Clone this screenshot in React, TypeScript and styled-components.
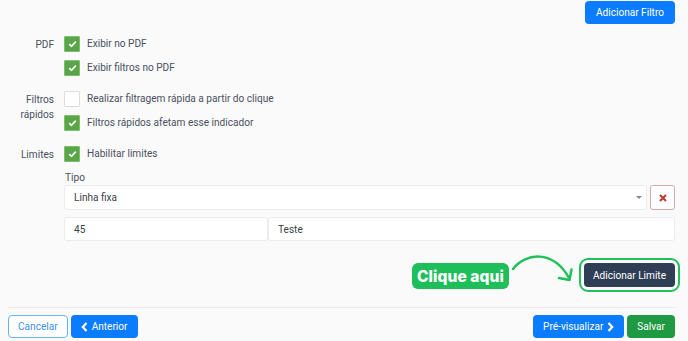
import React from 'react';
import styled, { createGlobalStyle } from 'styled-components';

const GlobalStyle = createGlobalStyle`
  html, body {
    margin: 0;
    padding: 0;
    background: #fafafa;
  }
  body {
    font-family: Roboto, "Liberation Sans", Arial, sans-serif;
    font-size: 10.1px;
    color: #4a5061;
  }
`;

const Page = styled.div`
  width: 688px;
  height: 341px;
  box-sizing: border-box;
  padding: 1px 13px 0 8px;
  display: flex;
  flex-direction: column;
  overflow: hidden;
`;

const TopBar = styled.div`
  display: flex;
  justify-content: flex-end;
`;

type Variant = 'primary' | 'dark' | 'success' | 'outline';

const Button = styled.button<{ $variant: Variant; $highlight?: boolean }>`
  font-family: Roboto, "Liberation Sans", Arial, sans-serif;
  font-size: 10.1px;
  height: ${(p) => (p.$variant === 'dark' ? '24px' : '23px')};
  padding: 0 ${(p) => (p.$variant === 'dark' ? '8px' : '9px')};
  border-radius: 4px;
  border: 1px solid transparent;
  display: inline-flex;
  align-items: center;
  gap: 4px;
  cursor: pointer;
  white-space: nowrap;
  color: #fff;
  background: ${(p) =>
    p.$variant === 'primary'
      ? '#0b7cfd'
      : p.$variant === 'dark'
        ? '#2f3e55'
        : p.$variant === 'success'
          ? '#1f9a43'
          : '#fff'};
  ${(p) =>
    p.$variant === 'outline' &&
    `
    color: #3d8ff0;
    border-color: #6ab1ff;
  `}
  ${(p) =>
    p.$highlight &&
    `
    outline: 2px solid #22c05a;
    outline-offset: 3px;
  `}
`;

const Form = styled.div`
  margin-top: 12px;
  display: flex;
  flex-direction: column;
  gap: 15px;
`;

const Group = styled.div`
  display: grid;
  grid-template-columns: 46px 1fr;
  column-gap: 10px;
`;

const GroupLabel = styled.div`
  text-align: right;
  line-height: 15px;
  padding-top: 0.5px;
`;

const Options = styled.div`
  display: flex;
  flex-direction: column;
  gap: 8px;
`;

const Option = styled.label`
  display: flex;
  align-items: center;
  gap: 7px;
  height: 16px;
  line-height: 16px;
`;

const Box = styled.span<{ $checked: boolean }>`
  width: 16px;
  height: 16px;
  box-sizing: border-box;
  border-radius: 1px;
  display: inline-flex;
  align-items: center;
  justify-content: center;
  background: ${(p) => (p.$checked ? '#5aa547' : '#fff')};
  border: 1px solid ${(p) => (p.$checked ? '#7cbf6b' : '#dcdcdc')};
`;

const Check = () => (
  <svg width="9" height="8" viewBox="0 0 9 8">
    <path d="M1.2 4.2 L3.5 6.3 L7.8 1.6" fill="none" stroke="#fff" strokeWidth="1.6" />
  </svg>
);

const Checkbox = ({ checked, label }: { checked: boolean; label: string }) => (
  <Option>
    <Box $checked={checked}>{checked && <Check />}</Box>
    {label}
  </Option>
);

const Limits = styled.div`
  margin-top: -6px;
  margin-left: 56px;
  display: flex;
  flex-direction: column;
`;

const FieldLabel = styled.div`
  line-height: 14px;
  padding-left: 1px;
`;

const SelectRow = styled.div`
  display: flex;
  gap: 3px;
`;

const Select = styled.div`
  flex: 1;
  height: 25px;
  box-sizing: border-box;
  background: #fff;
  border: 1px solid #ececec;
  border-radius: 3px;
  display: flex;
  align-items: center;
  justify-content: space-between;
  padding: 0 4px 0 9px;
  color: #3b3f47;
`;

const Caret = styled.span`
  width: 0;
  height: 0;
  border-left: 3px solid transparent;
  border-right: 3px solid transparent;
  border-top: 3px solid #888;
`;

const ClearButton = styled.button`
  width: 25px;
  height: 25px;
  padding: 0;
  background: #fff;
  border: 1px solid #d9aaaa;
  border-radius: 3px;
  display: flex;
  align-items: center;
  justify-content: center;
`;

const InputsRow = styled.div`
  margin-top: 7px;
  display: grid;
  grid-template-columns: 204px 1fr;
`;

const Input = styled.div`
  height: 24px;
  box-sizing: border-box;
  background: #fff;
  border: 1px solid #ececec;
  border-radius: 3px;
  display: flex;
  align-items: center;
  padding: 0 9px;
  color: #3b3f47;
`;

const ActionRow = styled.div`
  margin-top: 10px;
  height: 48px;
  display: flex;
  justify-content: flex-end;
  align-items: center;
`;

const Badge = styled.span`
  font-family: Inter, "Open Sans", sans-serif;
  font-weight: 800;
  font-size: 15.5px;
  letter-spacing: 0.1px;
  color: #fff;
  background: #1ebf5b;
  border-radius: 6px;
  height: 26px;
  width: 97px;
  display: inline-flex;
  align-items: center;
  justify-content: center;
  margin-top: 2px;
`;

const Arrow = styled.svg`
  flex: none;
  margin: 0 11px 8px 2px;
`;

const Divider = styled.hr`
  margin: 8px 0 0;
  border: none;
  border-top: 1px solid #ececec;
`;

const Footer = styled.div`
  margin-top: 7px;
  display: flex;
  justify-content: space-between;
`;

const ButtonGroup = styled.div`
  display: flex;
  gap: 3px;
`;

const Chevron = ({ dir }: { dir: 'left' | 'right' }) => (
  <svg width="7" height="10" viewBox="0 0 7 10">
    <path
      d={dir === 'left' ? 'M5.5 1 L1.8 5 L5.5 9' : 'M1.5 1 L5.2 5 L1.5 9'}
      fill="none"
      stroke="#fff"
      strokeWidth="2.2"
    />
  </svg>
);

export default function App() {
  return (
    <>
      <GlobalStyle />
      <Page>
        <TopBar>
          <Button $variant="primary" style={{ padding: '0 10px' }}>Adicionar Filtro</Button>
        </TopBar>
        <Form>
          <Group>
            <GroupLabel>PDF</GroupLabel>
            <Options>
              <Checkbox checked label="Exibir no PDF" />
              <Checkbox checked label="Exibir filtros no PDF" />
            </Options>
          </Group>
          <Group>
            <GroupLabel>Filtros rápidos</GroupLabel>
            <Options>
              <Checkbox checked={false} label="Realizar filtragem rápida a partir do clique" />
              <Checkbox checked label="Filtros rápidos afetam esse indicador" />
            </Options>
          </Group>
          <Group>
            <GroupLabel>Limites</GroupLabel>
            <Options>
              <Checkbox checked label="Habilitar limites" />
            </Options>
          </Group>
          <Limits>
            <FieldLabel>Tipo</FieldLabel>
            <SelectRow>
              <Select>
                Linha fixa
                <Caret />
              </Select>
              <ClearButton>
                <svg width="8" height="8" viewBox="0 0 8 8">
                  <path d="M1 1 L7 7 M7 1 L1 7" stroke="#c0392b" strokeWidth="2" />
                </svg>
              </ClearButton>
            </SelectRow>
            <InputsRow>
              <Input>45</Input>
              <Input>Teste</Input>
            </InputsRow>
          </Limits>
        </Form>
        <ActionRow>
          <Badge>Clique aqui</Badge>
          <Arrow width="62" height="40" viewBox="0 0 62 40">
            <path d="M2 18 C 14 2, 42 -2, 58 27" fill="none" stroke="#22c05a" strokeWidth="2.5" strokeLinecap="round" />
            <path d="M48 27 L58.5 29 L60.5 18.5" fill="none" stroke="#22c05a" strokeWidth="2.5" strokeLinecap="round" strokeLinejoin="round" />
          </Arrow>
          <Button $variant="dark" $highlight>Adicionar Limite</Button>
        </ActionRow>
        <Divider />
        <Footer>
          <ButtonGroup>
            <Button $variant="outline">Cancelar</Button>
            <Button $variant="primary">
              <Chevron dir="left" />
              Anterior
            </Button>
          </ButtonGroup>
          <ButtonGroup>
            <Button $variant="primary">
              Pré-visualizar
              <Chevron dir="right" />
            </Button>
            <Button $variant="success">Salvar</Button>
          </ButtonGroup>
        </Footer>
      </Page>
    </>
  );
}
